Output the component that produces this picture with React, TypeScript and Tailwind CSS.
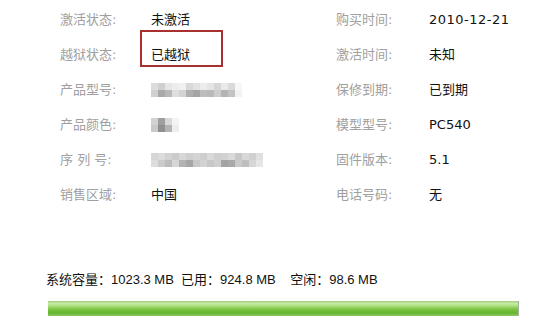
import React from "react";

const font = { fontFamily: '"DejaVu Sans", "Noto Sans CJK SC", sans-serif' };
const font2 = { fontFamily: '"Liberation Sans", "Noto Sans CJK SC", sans-serif' };

function Pix({ rows }: { rows: string[][] }) {
  return (
    <div className="flex flex-col">
      {rows.map((r, i) => (
        <div key={i} className="flex">
          {r.map((c, j) => (
            <div key={j} className={`w-[7px] h-[7px] ${c}`} />
          ))}
        </div>
      ))}
    </div>
  );
}

const modelRows = [
  ["bg-[#dcdcdc]", "bg-[#cfcfcf]", "bg-[#e6e6e6]", "bg-[#ececec]", "bg-[#f0f0f0]", "bg-[#d8d8d8]", "bg-[#e2e2e2]", "bg-[#ececec]", "bg-[#e4e4e4]", "bg-[#d6d6d6]", "bg-[#e9e9e9]", "bg-[#dadada]", "bg-[#f6f6f6]"],
  ["bg-[#d0d0d0]", "bg-[#a9a9a9]", "bg-[#b8b8b8]", "bg-[#dedede]", "bg-[#d4d4d4]", "bg-[#b0b0b0]", "bg-[#a5a5a5]", "bg-[#bdbdbd]", "bg-[#b9b9b9]", "bg-[#cdcdcd]", "bg-[#b4b4b4]", "bg-[#c3c3c3]", "bg-[#f2f2f2]"],
];
const colorRows = [
  ["bg-[#d2d2d2]", "bg-[#9f9f9f]", "bg-[#d9d9d9]", "bg-[#f4f4f4]"],
  ["bg-[#c9c9c9]", "bg-[#8f8f8f]", "bg-[#b4b4b4]", "bg-[#ededed]"],
];
const serialRows = [
  ["bg-[#d6d6d6]", "bg-[#dcdcdc]", "bg-[#d2d2d2]", "bg-[#cbcbcb]", "bg-[#d7d7d7]", "bg-[#cfcfcf]", "bg-[#d4d4d4]", "bg-[#cdcdcd]", "bg-[#d9d9d9]", "bg-[#cfcfcf]", "bg-[#d2d2d2]", "bg-[#dadada]", "bg-[#c8c8c8]", "bg-[#d8d8d8]", "bg-[#d0d0d0]", "bg-[#e0e0e0]"],
  ["bg-[#dddddd]", "bg-[#cbcbcb]", "bg-[#bcbcbc]", "bg-[#d6d6d6]", "bg-[#b3b3b3]", "bg-[#a6a6a6]", "bg-[#c8c8c8]", "bg-[#d3d3d3]", "bg-[#c7c7c7]", "bg-[#cfcfcf]", "bg-[#a3a3a3]", "bg-[#a9a9a9]", "bg-[#c9c9c9]", "bg-[#bebebe]", "bg-[#d6d6d6]", "bg-[#e6e6e6]"],
];

type Row = { l: string; lv: React.ReactNode; r: string; rv: string; box?: boolean };

const rows: Row[] = [
  { l: "激活状态:", lv: "未激活", r: "购买时间:", rv: "2010-12-21" },
  { l: "越狱状态:", lv: "已越狱", r: "激活时间:", rv: "未知", box: true },
  { l: "产品型号:", lv: <Pix rows={modelRows} />, r: "保修到期:", rv: "已到期" },
  { l: "产品颜色:", lv: <Pix rows={colorRows} />, r: "模型型号:", rv: "PC540" },
  { l: "序 列 号:", lv: <Pix rows={serialRows} />, r: "固件版本:", rv: "5.1" },
  { l: "销售区域:", lv: "中国", r: "电话号码:", rv: "无" },
];

export default function App() {
  return (
    <div className="w-[543px] h-[330px] bg-white overflow-hidden" style={font}>
      <div className="pt-[2px] pl-[60px] flex flex-col">
        {rows.map((row, i) => (
          <div key={i} className="flex h-[35px] items-center text-[13px]">
            <div className="w-[91px] text-[#a0a0a0]">{row.l}</div>
            <div className="w-[185px] self-stretch text-[#111] relative flex items-center">
              {row.box && (
                <div className="absolute left-[-11px] top-[-7px] w-[83px] h-[37px] border-2 border-[#a8302f]" />
              )}
              {row.lv}
            </div>
            <div className="w-[93px] text-[#a0a0a0]">{row.r}</div>
            <div className={`text-[#111] ${i === 0 ? "tracking-[0.5px]" : ""}`}>{row.rv}</div>
          </div>
        ))}
      </div>
      <div className="mt-[60px] pl-[46px] text-[13px] text-[#111] leading-4 whitespace-pre" style={font2}>
        系统容量：1023.3 MB  已用：924.8 MB    空闲：98.6 MB
      </div>
      <div className="mt-[13px] ml-[48px] w-[471px] h-[15px] border-r border-[#a9b0a4] bg-[linear-gradient(to_bottom,#9fd07a_0%,#c7eca6_18%,#a6dc78_35%,#7cc443_55%,#66b52f_80%,#8cc866_100%)]" />
    </div>
  );
}
